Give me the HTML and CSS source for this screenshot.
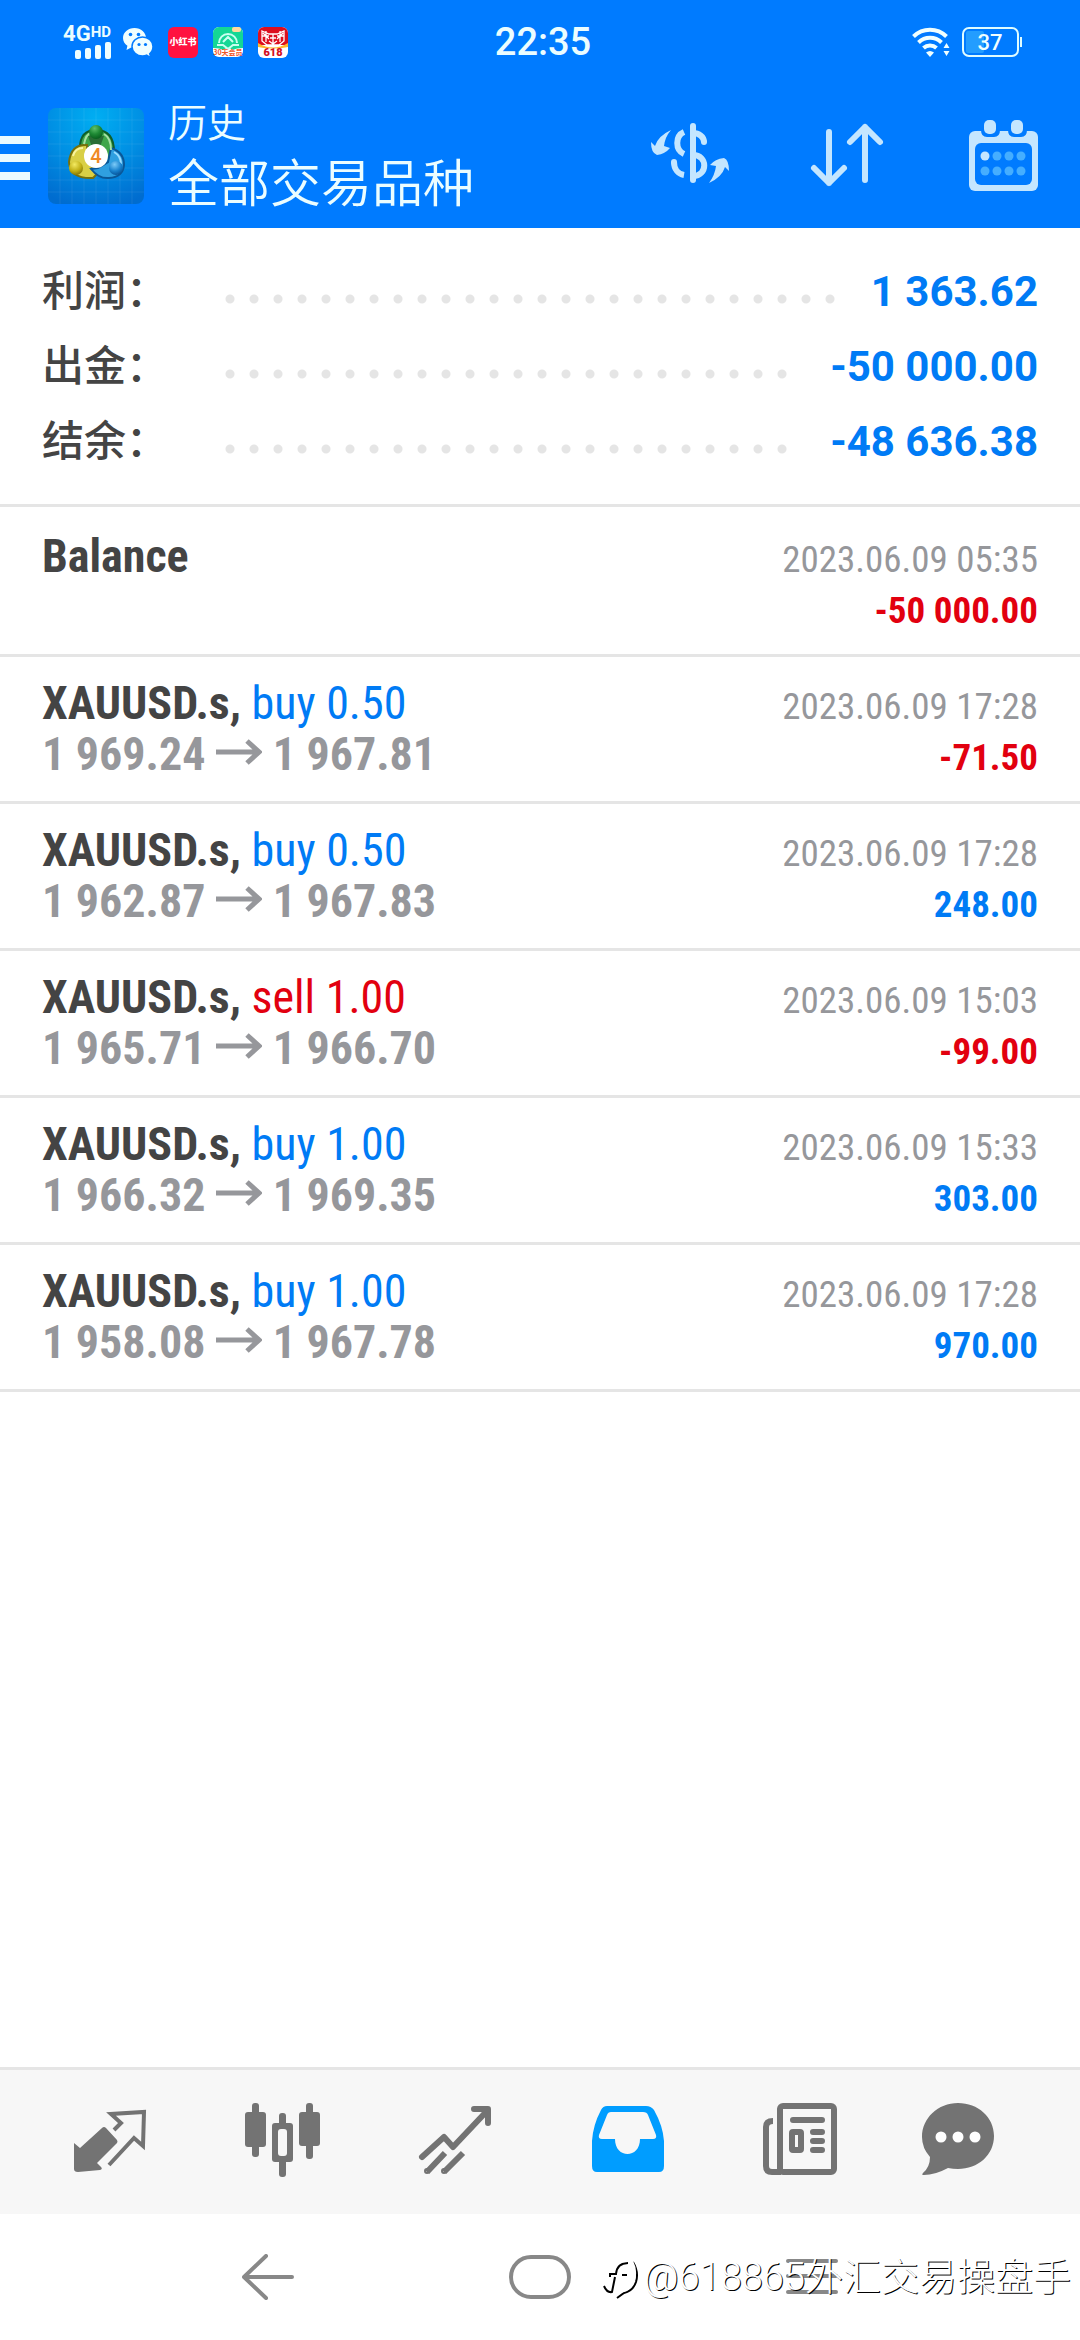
FILE: index.html
```html
<!DOCTYPE html>
<html lang="zh-CN">
<head>
<meta charset="utf-8">
<meta name="viewport" content="width=device-width, initial-scale=1">
<title>历史 - 全部交易品种</title>
<link rel="stylesheet" href="styles.css">
</head>
<body>
<div class="screen">
  <header class="top">
    <div class="status">
      <div class="status-left">
        <div class="network">
          <div class="network-type">4G<sup class="network-hd">HD</sup></div>
          <svg class="signal" width="36" height="17" viewBox="0 0 36 17" fill="#f0ffff"><rect y="8" width="6" height="9" rx="2"/><rect x="10" y="6" width="6" height="11" rx="2"/><rect x="20" y="3" width="6" height="14" rx="2"/><rect x="30" width="6" height="17" rx="2"/></svg>
        </div>
        <svg class="app-icon" width="30" height="32" viewBox="0 0 30 32">
          <path fill="#f0ffff" d="M11.500 2C5 2 0 6.500 0 12c0 3.200 1.700 6 4.400 7.800L3.500 24l4.700-2.600c1.100.3 2.200.4 3.300.4 6.500 0 11.500-4.400 11.500-9.800S18 2 11.500 2z"/>
          <circle cx="7.500" cy="8.500" r="1.800" fill="#007bff"/><circle cx="15.500" cy="8.500" r="1.800" fill="#007bff"/>
          <path fill="#f0ffff" stroke="#007bff" stroke-width="1.500" d="M19.500 11C13.700 11 9 15.300 9 20.500S13.700 30 19.500 30c1.500 0 2.900-.3 4.100-.8L28 32l-1.300-4.300c2-1.700 3.300-4.300 3.300-7.200C30 15.300 25.300 11 19.500 11z"/>
          <circle cx="16" cy="18.500" r="1.600" fill="#007bff"/><circle cx="22.500" cy="18.500" r="1.600" fill="#007bff"/>
        </svg>
        <svg class="app-icon" width="30" height="32" viewBox="0 0 30 32"><rect y="1" width="30" height="31" rx="6" fill="#ff1240"/><text x="15" y="19" text-anchor="middle" class="tiny-cjk" fill="#fff">小红书</text></svg>
        <svg class="app-icon" width="30" height="32" viewBox="0 0 30 32">
          <rect y="1" width="30" height="30" rx="6" fill="#fff"/><path fill="#14d795" d="M0 22V7a6 6 0 0 1 6-6h18a6 6 0 0 1 6 6v15q-7 0-10 2-5-4-10 0-3-2-10-2z"/>
          <path fill="none" stroke="#c9fff0" stroke-width="2" d="M4 19h6l5 4 5-4h6M6 17a9 9 0 1 1 18 0M10 16l5-5 5 5"/>
          <rect x="19" y="1" width="9" height="5" rx="2" fill="#ffd9a0"/><text x="15" y="29" text-anchor="middle" class="tiny-label" fill="#f0562a">30天会员</text>
        </svg>
        <svg class="app-icon" width="30" height="32" viewBox="0 0 30 32">
          <rect y="1" width="30" height="31" rx="6" fill="#fff"/><path fill="#dc0f1f" d="M0 19V7a6 6 0 0 1 6-6h18a6 6 0 0 1 6 6v12z"/><path fill="#ffb62e" d="M0 17q15 9 30 0v4q-15 3-30 0z"/>
          <path fill="none" stroke="#fff" stroke-width="1.300" d="M4 5l7 3h8l7-3v10l-5 4H9l-5-4zM4 10h7M19 10h7M8 5v11M22 5v11M12 12h6M15 8v10M11 15l4 3 4-3M5 7l6 6M25 7l-6 6"/>
          <text x="15" y="30" text-anchor="middle" class="sale" fill="#d4101e">618</text>
        </svg>
      </div>
      <time class="clock">22:35</time>
      <div class="status-right">
        <svg width="38" height="30" viewBox="0 0 38 30" fill="none" stroke="#f0ffff" stroke-width="4">
          <path d="M1.500 9.500a23.500 23.500 0 0 1 33 0M6.500 15.500a16.500 16.500 0 0 1 23 0M11.500 21a9.500 9.500 0 0 1 13 0"/><path fill="#f0ffff" stroke="none" d="M14 25.500q4-3 8 0L18 30zM31.500 21l3-5 3 5zM31.500 24l3 5 3-5z"/>
        </svg>
        <svg width="61" height="30" viewBox="0 0 61 30"><rect x="1" y="1" width="55" height="28" rx="6" fill="none" stroke="#dffcff" stroke-width="2"/><rect x="4" y="4" width="18" height="22" rx="2" fill="#239dff"/><rect x="58" y="10" width="2" height="10" fill="#dffcff"/><text x="28" y="23" text-anchor="middle" class="battery" fill="#f0ffff">37</text></svg>
      </div>
    </div>
    <div class="appbar">
      <button class="menu" aria-label="菜单"><svg width="30" height="44" viewBox="0 0 30 44" fill="#ebfaff"><path d="M0 0h30v8H0zM0 18h30v8H0zM0 36h30v8H0z"/></svg></button>
      <svg class="logo" width="96" height="96" viewBox="0 0 96 96">
        <defs>
          <radialGradient id="bg" cx=".5" cy=".1" r=".95"><stop offset="0" stop-color="#00aef2"/><stop offset=".5" stop-color="#0090e4"/><stop offset="1" stop-color="#006ccf"/></radialGradient>
          <radialGradient id="green" cx=".4" cy=".25" r=".8"><stop offset="0" stop-color="#5fc06a"/><stop offset=".5" stop-color="#1f8a35"/><stop offset="1" stop-color="#065a1b"/></radialGradient>
          <radialGradient id="yellow" cx=".4" cy=".25" r=".8"><stop offset="0" stop-color="#f3ea62"/><stop offset=".6" stop-color="#bfae14"/><stop offset="1" stop-color="#7d7006"/></radialGradient>
          <radialGradient id="blue" cx=".4" cy=".25" r=".8"><stop offset="0" stop-color="#7ccbf8"/><stop offset=".6" stop-color="#1680cc"/><stop offset="1" stop-color="#064f94"/></radialGradient>
        </defs>
        <rect width="96" height="96" rx="8" fill="url(#bg)"/>
        <path stroke="#fff" stroke-opacity=".07" fill="none" d="M12 0v96M24 0v96M36 0v96M48 0v96M60 0v96M72 0v96M84 0v96M0 12h96M0 24h96M0 36h96M0 48h96M0 60h96M0 72h96M0 84h96"/>
        <path fill="#3fa64b" stroke="#0f5f2a" stroke-width="2" d="M32 40q0-18 16-18 18 0 18 22-1 5-5 7L50 38z"/>
        <path fill="#d9cf45" stroke="#77700a" stroke-width="2" d="M39 37q-16-1-18 17 1 17 24 16l4-4-9-12z"/>
        <path fill="#2f9fe0" stroke="#0a5797" stroke-width="2" d="M43 61q8 10 18 9 14-1 15-13 0-13-13-17l-3 14-10 6z"/>
        <path fill="none" stroke="#a8e0a5" stroke-width="2" d="M36 36q2-10 7-11M63 42q0-12-7-16"/><path fill="none" stroke="#f8f3a0" stroke-width="2" d="M25 48q2-8 10-8"/><path fill="none" stroke="#9bdcff" stroke-width="2" d="M66 44q7 4 7 12"/>
        <path d="M40 28h16l-4 11h-8z" fill="#2a6d35"/><circle cx="48" cy="24" r="7" fill="url(#green)"/><circle cx="28" cy="60" r="7" fill="url(#yellow)"/><circle cx="68" cy="60" r="7" fill="url(#blue)"/>
        <circle cx="48" cy="48" r="12" fill="#fff"/><text x="48" y="55" text-anchor="middle" class="logo-number" fill="#f08a24">4</text>
      </svg>
      <div class="titles"><p class="section">历史</p><h1 class="title">全部交易品种</h1></div>
      <div class="actions">
        <button class="action" aria-label="交易品种"><svg width="80" height="72" viewBox="0 -3 80 72">
          <path fill="#c4e6ff" d="M21 7Q8 13 5 23L1 19q0 11 6 13 8-1 13-7l-6-2q1-9 7-16zM59 60q13-6 16-16l4 4q0-11-5-13-9 1-14 7l6 1q-1 9-7 17z"/>
          <path fill="none" stroke="#c4e6ff" stroke-width="6" stroke-linecap="round" d="M43 3v54"/>
          <path fill="none" stroke="#c4e6ff" stroke-width="6" d="M34 9c-9 4-9 18 0 22M43 10c6 0 11 4 11 9M24 39c0 7 4 12 10 13M43 32c15 0 15 21 0 21"/><circle cx="54" cy="19" r="3" fill="#c4e6ff"/><circle cx="24" cy="39" r="3" fill="#c4e6ff"/>
        </svg></button>
        <button class="action" aria-label="排序"><svg width="80" height="72" viewBox="0 -3 80 72" fill="none" stroke="#c4e6ff" stroke-width="6" stroke-linecap="round" stroke-linejoin="round"><path d="M22 9v51M7 45l15 15 15-15M58 57V4M43 19L58 4l15 15"/></svg></button>
        <button class="action" aria-label="日期"><svg width="80" height="72" viewBox="0 0 80 72">
          <rect x="5" y="11" width="69" height="60" rx="6" fill="#c4e6ff"/><rect x="11" y="23" width="57" height="42" rx="6" fill="#007bff"/><path fill="#007bff" d="M17 10h19q0 7-6 7h-7q-6 0-6-7zM44 10h19q0 7-6 7h-7q-6 0-6-7z"/>
          <rect x="20" width="12" height="14" rx="5" fill="#c4e6ff"/><rect x="47" width="12" height="14" rx="5" fill="#c4e6ff"/>
          <circle cx="21" cy="36" r="4.500" fill="#c4e6ff"/><g fill="#45aeff"><circle cx="33" cy="36" r="4.500"/><circle cx="45" cy="36" r="4.500"/><circle cx="57" cy="36" r="4.500"/><circle cx="21" cy="51" r="4.500"/><circle cx="33" cy="51" r="4.500"/><circle cx="45" cy="51" r="4.500"/><circle cx="57" cy="51" r="4.500"/></g>
        </svg></button>
      </div>
    </div>
  </header>

  <main class="content">
    <dl class="summary">
      <div class="sum-row"><dt class="sum-label">利润：</dt><dd class="sum-value">1 363.62</dd></div>
      <div class="sum-row"><dt class="sum-label">出金：</dt><dd class="sum-value">-50 000.00</dd></div>
      <div class="sum-row"><dt class="sum-label">结余：</dt><dd class="sum-value">-48 636.38</dd></div>
    </dl>
    <ul class="deals">
      <li class="deal">
        <div class="line"><span class="symbol">Balance</span><time class="date">2023.06.09 05:35</time></div>
        <div class="line"><span class="amount loss">-50 000.00</span></div>
      </li>
      <li class="deal">
        <div class="line"><span><span class="symbol">XAUUSD.s,</span> <span class="side gain">buy 0.50</span></span><time class="date">2023.06.09 17:28</time></div>
        <div class="line"><span class="prices">1 969.24 <svg class="arrow" width="46" height="26" viewBox="0 0 46 26"><path d="M0 13h43M31 2l12 11-12 11"/></svg> 1 967.81</span><span class="amount loss">-71.50</span></div>
      </li>
      <li class="deal">
        <div class="line"><span><span class="symbol">XAUUSD.s,</span> <span class="side gain">buy 0.50</span></span><time class="date">2023.06.09 17:28</time></div>
        <div class="line"><span class="prices">1 962.87 <svg class="arrow" width="46" height="26" viewBox="0 0 46 26"><path d="M0 13h43M31 2l12 11-12 11"/></svg> 1 967.83</span><span class="amount gain">248.00</span></div>
      </li>
      <li class="deal">
        <div class="line"><span><span class="symbol">XAUUSD.s,</span> <span class="side loss">sell 1.00</span></span><time class="date">2023.06.09 15:03</time></div>
        <div class="line"><span class="prices">1 965.71 <svg class="arrow" width="46" height="26" viewBox="0 0 46 26"><path d="M0 13h43M31 2l12 11-12 11"/></svg> 1 966.70</span><span class="amount loss">-99.00</span></div>
      </li>
      <li class="deal">
        <div class="line"><span><span class="symbol">XAUUSD.s,</span> <span class="side gain">buy 1.00</span></span><time class="date">2023.06.09 15:33</time></div>
        <div class="line"><span class="prices">1 966.32 <svg class="arrow" width="46" height="26" viewBox="0 0 46 26"><path d="M0 13h43M31 2l12 11-12 11"/></svg> 1 969.35</span><span class="amount gain">303.00</span></div>
      </li>
      <li class="deal">
        <div class="line"><span><span class="symbol">XAUUSD.s,</span> <span class="side gain">buy 1.00</span></span><time class="date">2023.06.09 17:28</time></div>
        <div class="line"><span class="prices">1 958.08 <svg class="arrow" width="46" height="26" viewBox="0 0 46 26"><path d="M0 13h43M31 2l12 11-12 11"/></svg> 1 967.78</span><span class="amount gain">970.00</span></div>
      </li>
    </ul>
  </main>

  <nav class="tabs" aria-label="主导航">
    <button class="tab" aria-label="行情"><svg width="76" height="76" viewBox="0 0 76 76">
      <path fill="currentColor" d="M2 42l6 5 22-20q2-2 4 0l11 12q1 2 0 3L25 62l4 4q2 2-1 3L6 71q-4 0-4-3V42q0-3 0 0z"/>
      <path fill="none" stroke="currentColor" stroke-width="4" d="M42 29l7-7-10-9 33-2-1 34-9-8-25 27"/>
    </svg></button>
    <button class="tab" aria-label="图表"><svg width="76" height="76" viewBox="0 0 76 76" fill="currentColor">
      <rect y="11" width="21" height="35" rx="3"/><rect x="7" y="2" width="7" height="54" rx="3"/><rect x="54" y="11" width="21" height="34" rx="3"/><rect x="61" y="2" width="7" height="56" rx="3"/>
      <rect x="34" y="12" width="7" height="64" rx="3"/><rect x="27" y="22" width="21" height="39" rx="3"/><rect x="33" y="28" width="9" height="27" rx="3" fill="#f7f7f7"/>
    </svg></button>
    <button class="tab" aria-label="交易"><svg width="76" height="76" viewBox="0 0 76 76" fill="none" stroke="currentColor" stroke-width="6" stroke-linecap="round" stroke-linejoin="round">
      <path d="M5 56l22-20 9 10L69 11M57 8h14v14"/><path stroke-linecap="butt" d="M10 71l18-19M27 71l19-19"/><circle cx="10" cy="70" r="1" stroke-width="4"/><circle cx="27" cy="70" r="1" stroke-width="4"/>
    </svg></button>
    <button class="tab tab-active" aria-label="历史" aria-current="page"><svg width="76" height="76" viewBox="0 0 76 76">
      <path fill="currentColor" fill-rule="evenodd" d="M17 5h39q5 0 8 4 9 16 10 31v25q0 6-5 6H7q-5 0-5-6V40q1-16 9-31 2-4 6-4zM21 11q-3 0-4 3L9 34q-1 4 3 4h13c0 20 25 20 25 0h13q4 0 3-4l-8-20q-1-3-5-3z"/>
    </svg></button>
    <button class="tab" aria-label="新闻"><svg width="76" height="76" viewBox="0 0 76 76" fill="none" stroke="currentColor" stroke-width="6">
      <rect x="18" y="5" width="54" height="66" rx="3"/><path d="M11 20q-7 0-7 6v39q0 6 6 6h9"/><path stroke-linecap="round" d="M31 19h29M51 31h9M51 40h9M51 49h9"/><rect x="30" y="31" width="9" height="18" rx="1"/>
    </svg></button>
    <button class="tab" aria-label="消息"><svg width="76" height="76" viewBox="0 0 76 76">
      <path fill="currentColor" d="M38 2C18 2 2 17 2 36q0 11 8 20 0 10-7 16-2 2 1 2 11 0 24-7 5 1 10 1c20 0 36-14 36-33S58 2 38 2z"/><g fill="#fff"><circle cx="21" cy="36" r="5.500"/><circle cx="38" cy="36" r="5.500"/><circle cx="55" cy="36" r="5.500"/></g>
    </svg></button>
  </nav>

  <footer class="system">
    <button class="key" aria-label="返回"><svg width="52" height="46" viewBox="0 0 52 46"><path d="M24 2L2 23l22 21M3 23h47"/></svg></button>
    <button class="key" aria-label="主屏幕"><svg width="62" height="46" viewBox="0 0 62 46"><rect x="2" y="3" width="58" height="40" rx="20"/></svg></button>
    <button class="key" aria-label="最近任务"><svg width="52" height="46" viewBox="0 0 52 46"><path d="M2 7h48M2 22h48M2 38h48"/></svg></button>
    <div class="watermark">
      <svg width="36" height="44" viewBox="0 0 36 44" fill="none" stroke-width="4"><path stroke="#000" stroke-width="2" d="M26 8q-11 0-12 11H8v3M20 20h5M31 7q6 10 3 20-3 9-12 11l-7 5M2 31q3 7 8 6l3-15"/><path stroke="#fff" d="M26 5q-14 0-15 11H5M29 6q5 10 2 19-3 9-13 11"/></svg>
      <span>@618865外汇交易操盘手</span>
    </div>
  </footer>
</div>
</body>
</html>
```

FILE: styles.css
```css
* { box-sizing: border-box; }
body, h1, p, dl, dd, ul { margin: 0; padding: 0; }
body {
  background: #fff;
  color: #444;
  font-family: Roboto, "Noto Sans CJK SC", sans-serif;
}
button { padding: 0; border: 0; background: none; color: inherit; font: inherit; }
svg { display: block; flex: none; }

.screen { display: flex; flex-direction: column; min-height: 100vh; }

/* Header */
.top { background: #007bff; color: #ebfdff; }
.status {
  display: grid;
  grid-template-columns: 1fr auto 1fr;
  align-items: center;
  height: 84px;
  padding: 0 57px 0 63px;
}
.status-left { display: flex; align-items: center; gap: 15px; }
.network { display: flex; flex-direction: column; align-items: flex-end; width: 48px; }
.network-type { font-size: 22px; font-weight: 700; line-height: 16px; white-space: nowrap; }
.network-hd { font-size: 15px; line-height: 0; vertical-align: 4px; }
.network + .app-icon { margin-left: -3px; }
.clock { font-size: 38px; font-weight: 500; line-height: 44px; }
.status-right { display: flex; justify-content: flex-end; align-items: center; gap: 12px; }
.tiny-cjk { font: 900 9px "Noto Sans CJK SC", sans-serif; }
.tiny-label { font: 700 7px "Noto Sans CJK SC", sans-serif; }
.sale { font: 900 11px Roboto, sans-serif; }
.battery { font: 500 22px Roboto, sans-serif; }
.logo-number { font: 500 20px Roboto, sans-serif; }

.appbar { display: flex; align-items: center; height: 144px; padding-right: 36px; }
.menu { margin-right: 18px; padding-top: 4px; }
.titles { flex: 1; margin-left: 24px; padding-bottom: 6px; font-family: "Noto Sans CJK SC", sans-serif; }
.section { font-size: 39px; font-weight: 350; line-height: 54px; }
.title { font-size: 51px; font-weight: 350; line-height: 66px; }
.actions { display: flex; gap: 77px; }

/* Account totals */
.content { flex: 1; }
.summary { padding: 26px 42px 25px; border-bottom: 3px solid #e5e5e5; }
.sum-row {
  display: grid;
  grid-template-columns: 176px 1fr auto;
  height: 75px;
  font-size: 42px;
  line-height: 75px;
}
.sum-label { font-family: "Noto Sans CJK SC", sans-serif; font-weight: 500; line-height: 67px; }
.sum-value { display: contents; color: #007bf5; font-weight: 700; }
.sum-value::before {
  content: "";
  width: 100%;
  width: round(down, 100% - 24px, 24px);
  height: 24px;
  margin-top: 33px;
  background: radial-gradient(circle, #e5e5e5 4px, transparent 5px) 0 0 / 24px 24px;
}

/* Deals */
.deals { list-style: none; padding-top: 3px; }
.deal {
  padding: 21px 42px;
  border-bottom: 3px solid #e5e5e5;
  font-family: "Roboto Condensed", "Liberation Sans Narrow", Roboto, sans-serif;
}
.line {
  display: flex;
  align-items: baseline;
  height: 51px;
  font-size: 46px;
  line-height: 51px;
  white-space: nowrap;
}
/* keeps the baseline of a line that has only small text */
.line::before { content: "\200b"; }
.symbol { font-weight: 700; }
.prices { color: #96979b; font-weight: 700; }
.arrow { display: inline-block; fill: none; stroke: currentColor; stroke-width: 5; vertical-align: 5px; }
.date { margin-left: auto; color: #96979b; font-size: 37px; }
.amount { margin-left: auto; font-size: 37px; font-weight: 700; }
.gain { color: #007bf5; }
.loss { color: #e2000f; }

/* Tabs */
.tabs {
  display: grid;
  grid-template-columns: repeat(5, 6fr) 5fr;
  height: 147px;
  padding: 0 50px 6px 24px;
  border-top: 3px solid #e5e5e5;
  background: #f7f7f7;
  color: #737373;
}
.tab { display: flex; justify-content: center; align-items: center; }
.tab-active { color: #009dff; }

/* System keys */
.system {
  position: relative;
  display: flex;
  justify-content: space-around;
  align-items: center;
  height: 126px;
  padding: 0 12.5%;
}
.key svg { fill: none; stroke: #888; stroke-width: 4; stroke-linecap: round; stroke-linejoin: round; }
.watermark {
  position: absolute;
  right: 9px;
  bottom: 36px;
  display: flex;
  align-items: center;
  gap: 6px;
  color: #fff;
  font: 300 38px/54px Roboto, "Noto Sans CJK SC", sans-serif;
  text-shadow: 1px 1px 0 #000;
  white-space: nowrap;
}
```
